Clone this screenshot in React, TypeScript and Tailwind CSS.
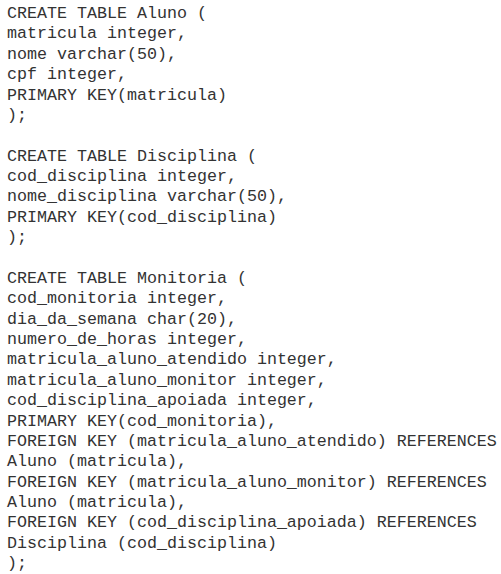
const sql = `CREATE TABLE Aluno (
matricula integer,
nome varchar(50),
cpf integer,
PRIMARY KEY(matricula)
);

CREATE TABLE Disciplina (
cod_disciplina integer,
nome_disciplina varchar(50),
PRIMARY KEY(cod_disciplina)
);

CREATE TABLE Monitoria (
cod_monitoria integer,
dia_da_semana char(20),
numero_de_horas integer,
matricula_aluno_atendido integer,
matricula_aluno_monitor integer,
cod_disciplina_apoiada integer,
PRIMARY KEY(cod_monitoria),
FOREIGN KEY (matricula_aluno_atendido) REFERENCES
Aluno (matricula),
FOREIGN KEY (matricula_aluno_monitor) REFERENCES
Aluno (matricula),
FOREIGN KEY (cod_disciplina_apoiada) REFERENCES
Disciplina (cod_disciplina)
);`

export default function App() {
  return (
    <div className="w-[501px] h-[574px] bg-white overflow-hidden">
      <pre className="pl-[7px] pt-[4px] m-0 font-['Courier_New','Liberation_Mono',monospace] text-[16.67px] leading-[20.37px] text-[#333]">
        {sql}
      </pre>
    </div>
  )
}
